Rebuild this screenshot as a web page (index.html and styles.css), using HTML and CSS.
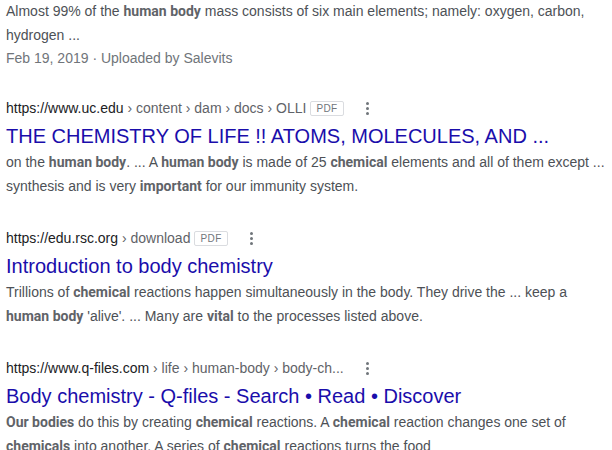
FILE: index.html
```html
<!DOCTYPE html>
<html>
<head>
<meta charset="utf-8">
<link rel="stylesheet" href="styles.css">
</head>
<body>
<div class="results">
  <div class="result first">
    <div class="snippet">Almost 99% of the <b>human body</b> mass consists of six main elements; namely: oxygen, carbon, hydrogen ...</div>
    <div class="meta">Feb 19, 2019 · Uploaded by Salevits</div>
  </div>

  <div class="result">
    <div class="url">
      <cite>https://www.uc.edu<span class="crumbs"> › content › dam › docs › OLLI</span></cite>
      <span class="badge">PDF</span>
      <span class="dots"><i></i><i></i><i></i></span>
    </div>
    <a class="title">THE CHEMISTRY OF LIFE !! ATOMS, MOLECULES, AND ...</a>
    <div class="snippet">on the <b>human body</b>. ... A <b>human body</b> is made of 25 <b>chemical</b> elements and all of them except ... synthesis and is very <b>important</b> for our immunity system.</div>
  </div>

  <div class="result">
    <div class="url">
      <cite>https://edu.rsc.org<span class="crumbs"> › download</span></cite>
      <span class="badge">PDF</span>
      <span class="dots"><i></i><i></i><i></i></span>
    </div>
    <a class="title">Introduction to body chemistry</a>
    <div class="snippet">Trillions of <b>chemical</b> reactions happen simultaneously in the body. They drive the ... keep a <b>human body</b> 'alive'. ... Many are <b>vital</b> to the processes listed above.</div>
  </div>

  <div class="result">
    <div class="url">
      <cite>https://www.q-files.com<span class="crumbs"> › life › human-body › body-ch...</span></cite>
      <span class="dots wide"><i></i><i></i><i></i></span>
    </div>
    <a class="title">Body chemistry - Q-files - Search • Read • Discover</a>
    <div class="snippet"><b>Our bodies</b> do this by creating <b>chemical</b> reactions. A <b>chemical</b> reaction changes one set of <b>chemicals</b> into another. A series of <b>chemical</b> reactions turns the food</div>
  </div>
</div>
</body>
</html>
```

FILE: styles.css
```css
html, body {
  margin: 0;
  padding: 0;
  background: #ffffff;
}

body {
  font-family: "Liberation Sans", Arial, sans-serif;
  color: #4d5156;
  overflow: hidden;
  height: 450px;
}

.results {
  padding: 0 6px;
  width: 606px;
}

.result {
  margin-bottom: 30px;
}

.result.first {
  margin-bottom: 29px;
}

.snippet {
  font-size: 14px;
  line-height: 24px;
  color: #4d5156;
}

.snippet b {
  font-family: Roboto, "Liberation Sans", Arial, sans-serif;
  color: #5f6368;
  font-weight: bold;
}

.first .snippet {
  margin-top: -1px;
}

.meta {
  font-size: 14px;
  line-height: 22px;
  color: #70757a;
}

.url {
  display: flex;
  align-items: center;
  height: 20px;
  font-size: 14px;
  line-height: 20px;
}

.url cite {
  font-style: normal;
  color: #202124;
  white-space: nowrap;
}

.crumbs {
  color: #5f6368;
}

.badge {
  margin-left: 4px;
  border: 1px solid #dadce0;
  border-radius: 2px;
  padding: 0 5px;
  font-size: 10px;
  line-height: 13px;
  color: #70757a;
  letter-spacing: 0.4px;
}

.dots {
  display: flex;
  flex-direction: column;
  gap: 2px;
  margin-left: 22px;
}

.dots.wide {
  margin-left: 22px;
}

.dots i {
  display: block;
  width: 3px;
  height: 3px;
  border-radius: 50%;
  background: #70757a;
}

.title {
  display: block;
  margin-top: 5px;
  font-size: 20px;
  line-height: 26px;
  color: #1a0dab;
  white-space: nowrap;
}

.result .title + .snippet {
  margin-top: 1px;
}
```
